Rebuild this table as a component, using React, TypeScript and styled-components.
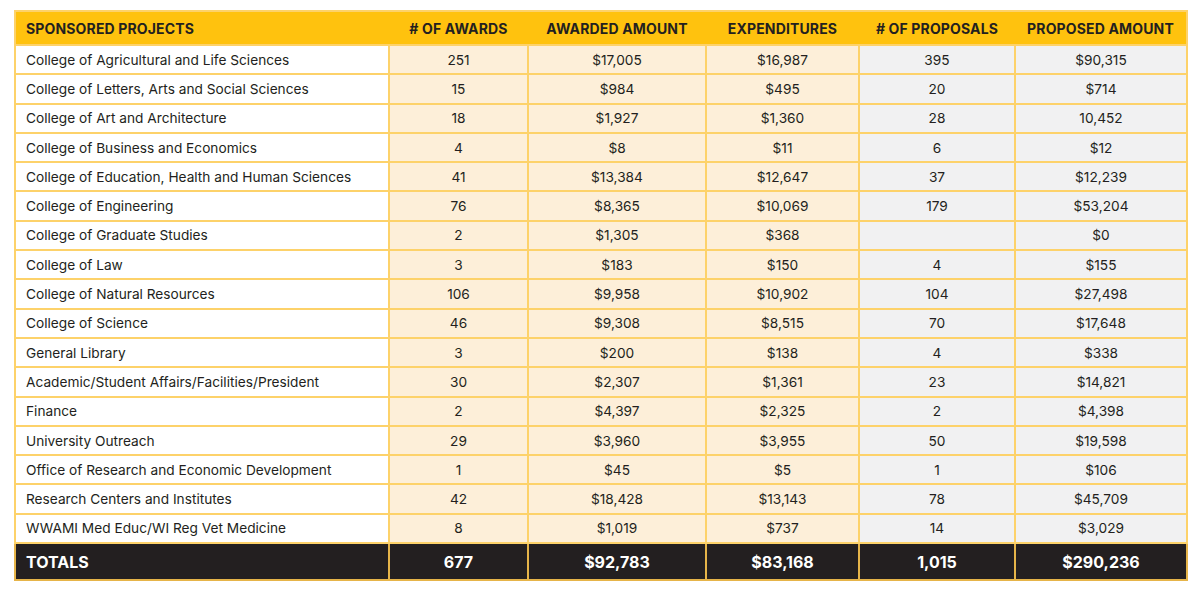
import React from "react";
import styled, { createGlobalStyle } from "styled-components";

const Global = createGlobalStyle`
  html, body { margin: 0; padding: 0; background: #ffffff; }
  body { font-family: Inter, "Noto Sans", Arial, sans-serif; color: #231f20; }
`;

const Page = styled.div`
  padding: 10px 14px 0 14px;
`;

const Table = styled.table`
  width: 1172px;
  border-collapse: collapse;
  table-layout: fixed;
  border: 2px solid #fdd26a;
`;

const HeadCell = styled.th<{ $left?: boolean }>`
  height: 32px;
  padding: 0 10px;
  background: #ffc20e;
  color: #231f20;
  font-size: 14px;
  font-weight: 700;
  letter-spacing: 0.15px;
  text-align: ${(p) => (p.$left ? "left" : "center")};
  text-transform: uppercase;
  white-space: nowrap;
`;

type Tone = "white" | "cream" | "gray";
const bg: Record<Tone, string> = { white: "#ffffff", cream: "#fdefd9", gray: "#f1f1f2" };

const Row = styled.tr`
  height: 29.3px;
`;

const Cell = styled.td<{ $tone: Tone; $left?: boolean }>`
  padding: 0 10px;
  background: ${(p) => bg[p.$tone]};
  border: 2px solid #fdd26a;
  font-size: 13.7px;
  font-weight: 400;
  color: #231f20;
  text-align: ${(p) => (p.$left ? "left" : "center")};
  white-space: nowrap;
`;

const TotalRow = styled.tr`
  height: 37px;
`;

const TotalCell = styled.td<{ $left?: boolean }>`
  padding: 0 10px;
  background: #231f20;
  border: 2px solid #e6b449;
  color: #ffffff;
  font-size: 16px;
  font-weight: 700;
  text-align: ${(p) => (p.$left ? "left" : "center")};
  white-space: nowrap;
`;

const widths = [374, 139, 178, 153, 156, 172];
const headers = ["Sponsored Projects", "# of Awards", "Awarded Amount", "Expenditures", "# of Proposals", "Proposed Amount"];
const tones: Tone[] = ["white", "cream", "cream", "cream", "gray", "gray"];

const rows: string[][] = [
  ["College of Agricultural and Life Sciences", "251", "$17,005", "$16,987", "395", "$90,315"],
  ["College of Letters, Arts and Social Sciences", "15", "$984", "$495", "20", "$714"],
  ["College of Art and Architecture", "18", "$1,927", "$1,360", "28", "10,452"],
  ["College of Business and Economics", "4", "$8", "$11", "6", "$12"],
  ["College of Education, Health and Human Sciences", "41", "$13,384", "$12,647", "37", "$12,239"],
  ["College of Engineering", "76", "$8,365", "$10,069", "179", "$53,204"],
  ["College of Graduate Studies", "2", "$1,305", "$368", "", "$0"],
  ["College of Law", "3", "$183", "$150", "4", "$155"],
  ["College of Natural Resources", "106", "$9,958", "$10,902", "104", "$27,498"],
  ["College of Science", "46", "$9,308", "$8,515", "70", "$17,648"],
  ["General Library", "3", "$200", "$138", "4", "$338"],
  ["Academic/Student Affairs/Facilities/President", "30", "$2,307", "$1,361", "23", "$14,821"],
  ["Finance", "2", "$4,397", "$2,325", "2", "$4,398"],
  ["University Outreach", "29", "$3,960", "$3,955", "50", "$19,598"],
  ["Office of Research and Economic Development", "1", "$45", "$5", "1", "$106"],
  ["Research Centers and Institutes", "42", "$18,428", "$13,143", "78", "$45,709"],
  ["WWAMI Med Educ/WI Reg Vet Medicine", "8", "$1,019", "$737", "14", "$3,029"],
];

const totals = ["TOTALS", "677", "$92,783", "$83,168", "1,015", "$290,236"];

export default function App() {
  return (
    <Page>
      <Global />
      <Table>
        <colgroup>
          {widths.map((w, i) => (
            <col key={i} style={{ width: w }} />
          ))}
        </colgroup>
        <thead>
          <tr>
            {headers.map((h, i) => (
              <HeadCell key={h} $left={i === 0}>
                {h}
              </HeadCell>
            ))}
          </tr>
        </thead>
        <tbody>
          {rows.map((r) => (
            <Row key={r[0]}>
              {r.map((c, i) => (
                <Cell key={i} $tone={tones[i]} $left={i === 0}>
                  {c}
                </Cell>
              ))}
            </Row>
          ))}
          <TotalRow>
            {totals.map((c, i) => (
              <TotalCell key={i} $left={i === 0}>
                {c}
              </TotalCell>
            ))}
          </TotalRow>
        </tbody>
      </Table>
    </Page>
  );
}
